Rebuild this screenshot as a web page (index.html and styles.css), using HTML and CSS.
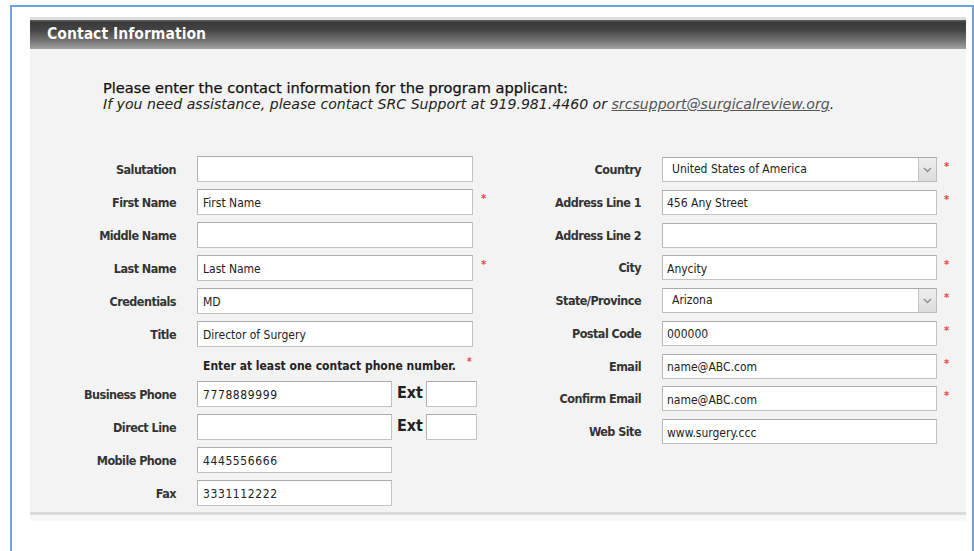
FILE: index.html
```html
<!DOCTYPE html>
<html lang="en">
<head>
<meta charset="utf-8">
<title>Contact Information</title>
<link rel="stylesheet" href="styles.css">
</head>
<body>
<div class="frame">
  <section class="panel">
    <h2 class="panel-title">Contact Information</h2>
    <div class="panel-body">
      <div class="intro">
        <p class="lead">Please enter the contact information for the program applicant:</p>
        <p class="help">If you need assistance, please contact SRC Support at 919.981.4460 or <a href="#">srcsupport@surgicalreview.org</a>.</p>
      </div>
      <div class="form">
        <div class="col col-left">
          <label class="lbl">Salutation</label>
          <div class="field"><input class="txt" type="text" value=""></div>

          <label class="lbl">First Name</label>
          <div class="field"><input class="txt" type="text" value="First Name"><span class="req">*</span></div>

          <label class="lbl">Middle Name</label>
          <div class="field"><input class="txt" type="text" value=""></div>

          <label class="lbl">Last Name</label>
          <div class="field"><input class="txt" type="text" value="Last Name"><span class="req">*</span></div>

          <label class="lbl">Credentials</label>
          <div class="field"><input class="txt" type="text" value="MD"></div>

          <label class="lbl">Title</label>
          <div class="field"><input class="txt" type="text" value="Director of Surgery"></div>

          <span class="lbl"></span>
          <div class="field note">Enter at least one contact phone number.<span class="req">*</span></div>

          <label class="lbl">Business Phone</label>
          <div class="field"><input class="txt phone" type="text" value="7778889999"><span class="ext">Ext</span><input class="txt ext-box" type="text" value=""></div>

          <label class="lbl">Direct Line</label>
          <div class="field"><input class="txt phone" type="text" value=""><span class="ext">Ext</span><input class="txt ext-box" type="text" value=""></div>

          <label class="lbl">Mobile Phone</label>
          <div class="field"><input class="txt phone" type="text" value="4445556666"></div>

          <label class="lbl">Fax</label>
          <div class="field"><input class="txt phone" type="text" value="3331112222"></div>
        </div>

        <div class="col col-right">
          <label class="lbl">Country</label>
          <div class="field">
            <div class="select"><span class="select-value">United States of America</span><span class="select-btn"><svg width="9" height="6" viewBox="0 0 9 6"><path d="M1 1l3.5 3.5L8 1" fill="none" stroke="#8a8a8a" stroke-width="1.3"/></svg></span></div>
            <span class="req">*</span>
          </div>

          <label class="lbl">Address Line 1</label>
          <div class="field"><input class="txt" type="text" value="456 Any Street"><span class="req">*</span></div>

          <label class="lbl">Address Line 2</label>
          <div class="field"><input class="txt" type="text" value=""></div>

          <label class="lbl">City</label>
          <div class="field"><input class="txt" type="text" value="Anycity"><span class="req">*</span></div>

          <label class="lbl">State/Province</label>
          <div class="field">
            <div class="select"><span class="select-value">Arizona</span><span class="select-btn"><svg width="9" height="6" viewBox="0 0 9 6"><path d="M1 1l3.5 3.5L8 1" fill="none" stroke="#8a8a8a" stroke-width="1.3"/></svg></span></div>
            <span class="req">*</span>
          </div>

          <label class="lbl">Postal Code</label>
          <div class="field"><input class="txt" type="text" value="000000"><span class="req">*</span></div>

          <label class="lbl">Email</label>
          <div class="field"><input class="txt" type="text" value="name@ABC.com"><span class="req">*</span></div>

          <label class="lbl">Confirm Email</label>
          <div class="field"><input class="txt" type="text" value="name@ABC.com"><span class="req">*</span></div>

          <label class="lbl">Web Site</label>
          <div class="field"><input class="txt" type="text" value="www.surgery.ccc"></div>
        </div>
      </div>
    </div>
  </section>
</div>
</body>
</html>
```

FILE: styles.css
```css
* { box-sizing: border-box; }

html, body {
  margin: 0;
  padding: 0;
  background: #fff;
}

body {
  font-family: "DejaVu Sans", Verdana, sans-serif;
  color: #222;
}

/* outer window frame */
.frame {
  margin: 5px 0 0 10px;
  width: 964px;
  height: 546px;
  border: 2px solid #6ea2dd;
  border-bottom: none;
  padding: 10px 6px 0 18px;
}

.panel {
  border-top: 3px solid #dedede;
  background: #f7f7f7;
  padding-bottom: 6px;
}

.panel-title {
  margin: 0;
  height: 29px;
  line-height: 29px;
  padding-left: 17px;
  font-size: 15.6px;
  font-weight: bold;
  font-stretch: condensed;
  color: #fff;
  text-shadow: 0 0 1px rgba(0, 0, 0, 0.4);
  background: linear-gradient(#626262 0, #3a3a3a 9%, #454545 35%, #747474 72%, #a4a4a4 100%);
}

.panel-body {
  background: #f3f3f3;
  border-bottom: 3px solid #dadada;
  padding-bottom: 6px;
}

.intro {
  padding: 30px 0 0 73px;
}

.intro p {
  margin: 0;
  line-height: 17px;
}

.lead {
  font-size: 14.6px;
  color: #111;
  -webkit-text-stroke: 0.25px #111;
}

.help {
  font-size: 14.1px;
  font-style: italic;
  color: #222;
}

.help a {
  color: #555;
  text-decoration: underline;
}

.form {
  display: flex;
  margin-top: 43px;
}

.col {
  display: grid;
  column-gap: 21px;
  align-items: center;
}

.col-left {
  width: 463px;
  grid-template-columns: 146px 1fr;
  grid-template-rows: repeat(6, 26px) 20px repeat(4, 26px);
  row-gap: 7px;
}

.col-right {
  margin-left: 7px;
  padding-top: 1px;
  grid-template-columns: 141px 1fr;
  grid-auto-rows: 25px;
  row-gap: 7.75px;
  align-content: start;
}

.lbl {
  text-align: right;
  font-size: 12.5px;
  letter-spacing: -0.55px;
  font-weight: bold;
  font-stretch: condensed;
  color: #333;
}

.field {
  display: flex;
  align-items: flex-start;
  height: 100%;
}

.txt {
  width: 276px;
  height: 100%;
  margin: 0;
  padding: 2px 5px 0;
  border: 1px solid #c2c2c2;
  border-top-color: #ababab;
  border-left-color: #b5b5b5;
  background: #fff;
  font-family: "DejaVu Sans", Verdana, sans-serif;
  font-size: 12px;
  font-stretch: condensed;
  color: #222;
  outline: none;
}

.col-right .txt { width: 275px; padding-left: 4px; }

.txt.phone { width: 195px; letter-spacing: 0.6px; }

.ext {
  margin: 0 3px 0 5px;
  font-size: 16px;
  font-weight: bold;
  font-stretch: condensed;
  line-height: 24px;
  color: #222;
}

.txt.ext-box { width: 51px; }

.req {
  margin: 5px 0 0 8px;
  color: #e04848;
  font-size: 10px;
  line-height: 10px;
  font-weight: bold;
}

.col-right .req { margin-left: 7px; }

.note {
  align-items: center;
  padding: 4px 0 0 6px;
  font-size: 12px;
  font-weight: bold;
  font-stretch: condensed;
  color: #222;
}

.note .req { margin: -8px 0 0 11px; }

.select {
  display: flex;
  width: 275px;
  height: 100%;
  border: 1px solid #bcbcbc;
  border-top-color: #a9a9a9;
  background: #fff;
}

.select-value {
  flex: 1;
  padding: 4px 0 0 9px;
  font-size: 12px;
  font-stretch: condensed;
  color: #222;
}

.select-btn {
  width: 18px;
  display: flex;
  align-items: center;
  justify-content: center;
  background: linear-gradient(#eeeeee, #dcdcdc);
  border-left: 1px solid #c4c4c4;
}
```
